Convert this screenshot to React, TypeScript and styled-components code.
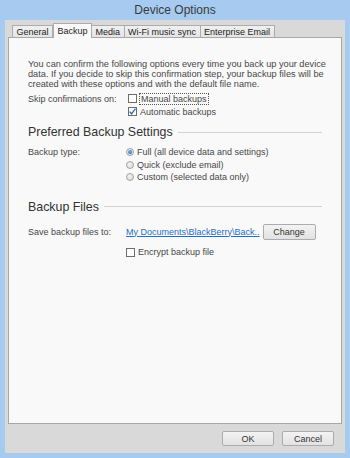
import React from 'react'
import styled, { createGlobalStyle } from 'styled-components'

const GlobalStyle = createGlobalStyle`
    html, body {
        margin: 0;
        padding: 0;
    }
    body {
        width: 350px;
        height: 458px;
        overflow: hidden;
        font-family: "Liberation Sans", Arial, sans-serif;
    }
`

const Window = styled.div`
    display: flex;
    flex-direction: column;
    width: 350px;
    height: 458px;
    box-sizing: border-box;
    padding: 0 5px 5px;
    background-color: #a6caf0;
`

const TitleBar = styled.div`
    height: 20px;
    display: flex;
    align-items: center;
    justify-content: center;
    font-size: 12px;
    color: #3a3a3a;
`

const Frame = styled.div`
    flex: 1;
    display: flex;
    flex-direction: column;
    background-color: #d9d9d9;
    padding: 3px 3px 0;
`

const TabRow = styled.div`
    display: flex;
    align-items: flex-end;
    height: 15px;
    padding-left: 4px;
    margin-bottom: -1px;
    position: relative;
    z-index: 1;
`

const Tab = styled.div<{ $active?: boolean }>`
    box-sizing: border-box;
    display: flex;
    align-items: center;
    padding: 0 3.5px;
    margin-left: ${({ $active }) => ($active ? '0' : '-1px')};
    height: ${({ $active }) => ($active ? '15px' : '12px')};
    margin-bottom: ${({ $active }) => ($active ? '0' : '1px')};
    border: 1px solid #acacac;
    border-bottom: none;
    background: ${({ $active }) =>
        $active ? '#f9f9f9' : 'linear-gradient(#f0f0f0, #e5e5e5)'};
    font-size: 9px;
    color: #222;
    &:first-child {
        margin-left: 0;
    }
`

const Panel = styled.div`
    flex: 1;
    display: flex;
    flex-direction: column;
    background-color: #f9f9f9;
    border: 1px solid #a7a7a7;
    padding: 21px 19px 0;
    font-size: 9px;
    color: #474747;
`

const Paragraph = styled.p`
    margin: 0;
    font-size: 9.2px;
    line-height: 10px;
    white-space: nowrap;
`

const OptionRow = styled.div<{ $top: number }>`
    display: flex;
    margin-top: ${({ $top }) => $top}px;
`

const RowLabel = styled.div<{ $height: number }>`
    width: 98px;
    flex-shrink: 0;
    height: ${({ $height }) => $height}px;
    display: flex;
    align-items: center;
`

const Options = styled.div<{ $indent?: number }>`
    display: flex;
    flex-direction: column;
    padding-left: ${({ $indent }) => $indent || 0}px;
`

const Choice = styled.label<{ $height: number }>`
    display: flex;
    align-items: center;
    gap: 3px;
    height: ${({ $height }) => $height}px;
    white-space: nowrap;
`

const Box = styled.span`
    box-sizing: border-box;
    width: 9px;
    height: 9px;
    border: 1px solid #6d6d6d;
    background-color: #fff;
    display: flex;
    align-items: center;
    justify-content: center;
`

const Focused = styled.span`
    outline: 1px dotted #555;
    outline-offset: 0;
    padding: 0 1px;
`

const Radio = styled.span<{ $on?: boolean }>`
    box-sizing: border-box;
    width: 8px;
    height: 8px;
    border-radius: 50%;
    border: 1px solid #a4a4a4;
    background: radial-gradient(circle at 40% 35%, #f4f4f4, #d4d4d4);
    display: flex;
    align-items: center;
    justify-content: center;
    &::after {
        content: '';
        display: ${({ $on }) => ($on ? 'block' : 'none')};
        width: 4px;
        height: 4px;
        border-radius: 50%;
        background: radial-gradient(circle at 40% 35%, #6ab0f0, #1f64b4);
    }
`

const SectionTitle = styled.div<{ $top: number }>`
    display: flex;
    align-items: center;
    gap: 5px;
    height: 16px;
    margin-top: ${({ $top }) => $top}px;
    font-size: 12.4px;
    color: #333;
    white-space: nowrap;
    &::after {
        content: '';
        flex: 1;
        height: 1px;
        background-color: #d2d2d2;
    }
`

const PathLink = styled.a`
    color: #1d6fc8;
    text-decoration: underline;
    white-space: nowrap;
    cursor: pointer;
`

const Button = styled.button<{ $width: number; $height: number }>`
    box-sizing: border-box;
    width: ${({ $width }) => $width}px;
    height: ${({ $height }) => $height}px;
    padding: 0;
    border: 1px solid #acacac;
    border-radius: 2px;
    background: linear-gradient(#f3f3f3, #e2e2e2);
    font-family: "Liberation Sans", Arial, sans-serif;
    font-size: 9px;
    color: #333;
`

const Footer = styled.div`
    height: 29px;
    display: flex;
    align-items: center;
    justify-content: flex-end;
    gap: 8px;
    padding-right: 8px;
`

const Check = () => (
    <svg width="7" height="7" viewBox="0 0 7 7">
        <path d="M0.6 3.6 L2.6 5.8 L6.5 0.6" fill="none" stroke="#2b6cc0" strokeWidth="1.4" />
    </svg>
)

const tabs = ['General', 'Backup', 'Media', 'Wi-Fi music sync', 'Enterprise Email']

const App: React.FC = () => {
    return (
        <>
            <GlobalStyle />
            <Window>
                <TitleBar>Device Options</TitleBar>
                <Frame>
                    <TabRow>
                        {tabs.map((t) => (
                            <Tab key={t} $active={t === 'Backup'}>
                                {t}
                            </Tab>
                        ))}
                    </TabRow>
                    <Panel>
                        <Paragraph>
                            You can confirm the following options every time you back up your device
                            <br />
                            data. If you decide to skip this confirmation step, your backup files will be
                            <br />
                            created with these options and with the default file name.
                        </Paragraph>
                        <OptionRow $top={3}>
                            <RowLabel $height={13}>Skip confirmations on:</RowLabel>
                            <Options $indent={2}>
                                <Choice $height={13}>
                                    <Box />
                                    <Focused>Manual backups</Focused>
                                </Choice>
                                <Choice $height={13}>
                                    <Box>
                                        <Check />
                                    </Box>
                                    Automatic backups
                                </Choice>
                            </Options>
                        </OptionRow>
                        <SectionTitle $top={6}>Preferred Backup Settings</SectionTitle>
                        <OptionRow $top={6}>
                            <RowLabel $height={12.5}>Backup type:</RowLabel>
                            <Options>
                                <Choice $height={12.5}>
                                    <Radio $on />
                                    Full (all device data and settings)
                                </Choice>
                                <Choice $height={12.5}>
                                    <Radio />
                                    Quick (exclude email)
                                </Choice>
                                <Choice $height={12.5}>
                                    <Radio />
                                    Custom (selected data only)
                                </Choice>
                            </Options>
                        </OptionRow>
                        <SectionTitle $top={15}>Backup Files</SectionTitle>
                        <OptionRow $top={9}>
                            <RowLabel $height={16}>Save backup files to:</RowLabel>
                            <Options>
                                <Choice $height={16}>
                                    <PathLink>My Documents\BlackBerry\Back..</PathLink>
                                    <Button $width={53} $height={16}>
                                        Change
                                    </Button>
                                </Choice>
                            </Options>
                        </OptionRow>
                        <OptionRow $top={6}>
                            <RowLabel $height={13} />
                            <Options>
                                <Choice $height={13}>
                                    <Box />
                                    Encrypt backup file
                                </Choice>
                            </Options>
                        </OptionRow>
                    </Panel>
                    <Footer>
                        <Button $width={52} $height={15}>OK</Button>
                        <Button $width={52} $height={15}>Cancel</Button>
                    </Footer>
                </Frame>
            </Window>
        </>
    )
}

export default App
